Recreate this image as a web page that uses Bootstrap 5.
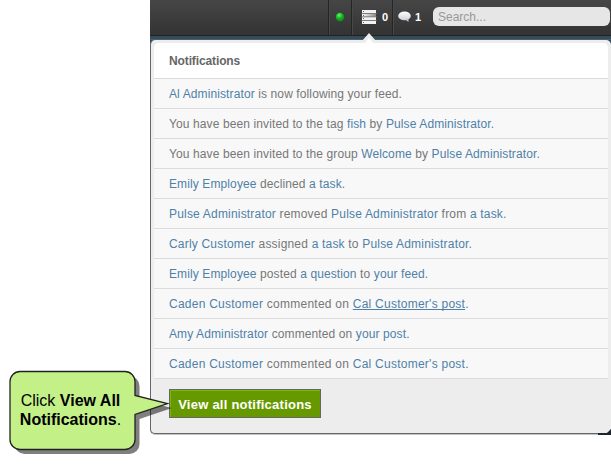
<!DOCTYPE html>
<html lang="en">
<head>
<meta charset="utf-8">
<title>Notifications</title>
<link href="https://cdn.jsdelivr.net/npm/bootstrap@5.3.0/dist/css/bootstrap.min.css" rel="stylesheet">
<style>
body{font-family:"Liberation Sans",Arial,sans-serif;font-size:12px;line-height:15px;color:#777;background:#fff;width:611px;height:464px;overflow:hidden}
.app-shell{margin-left:150px;width:461px}
.topbar{height:40px;padding-right:1px;background:linear-gradient(#464646,#333 35px,#222 35px,#222 36px,#344b5c 36px,#344b5c 39px,#4d5c66 39px)}
.tool{height:35px;border-left:1px solid #252525;box-shadow:inset 1px 0 #484848;color:#fff;font-size:11px;font-weight:700;padding-bottom:1px}
.tool-status{width:23px}.tool-feed{width:41px;padding-left:9px}.tool-chat{width:41px;padding-left:5px}
.tool-count{margin-left:5px;padding-top:1px}
.tool-chat .tool-count{margin-left:4px}
.search-box{width:177px;height:19px;margin-top:7px;border:0;border-radius:6px;background:#e6e6e6;padding:1px 5px 0;font-size:12px;line-height:18px;color:#777}
.search-box::placeholder{color:#999;opacity:1}
.tray-wrap{background:linear-gradient(#344b5c 10px,#fff 10px)}
.tray{height:394px;background:#ededed;border:1px solid #666;border-width:0 0 1px 1px;border-radius:5px;padding:3px 3px 0;box-shadow:0 1px #c4c4c4}
.tray-list{width:454px;border-radius:5px 5px 0 0;overflow:hidden;background:#f8f8f8}
.tray-list .list-group-item{height:30px;padding:8px 15px 0;border:0;border-bottom:1px solid #dcdcdc;border-radius:0;background:#f8f8f8;color:#777;white-space:nowrap;letter-spacing:.11px}
.tray-list .list-group-item.track-mid{letter-spacing:.19px}
.tray-list .list-group-item.track-wide{letter-spacing:.25px}
.tray-list .tray-title{height:36px;padding-top:11px;background:#fff;color:#666;font-weight:700;letter-spacing:-.12px}
.tray-list a{color:#4f81a8;text-decoration:none}
.tray-list a.hovered{text-decoration:underline 1px;text-underline-offset:1px;text-decoration-skip-ink:none}
.btn-all{margin:10px 0 0 15px;width:152px;height:29px;padding:0;border:1px solid #666;border-radius:0;background:#690;box-shadow:inset 1px 1px #7fb800;color:#fff;font-size:13px;font-weight:700;line-height:29px;letter-spacing:.24px}
.btn-all:hover{background:#5c8a00;color:#fff}
.pointer{left:362px;top:33px}
.callout{left:9px;top:370px;width:170px;height:86px}
.callout-text{left:0;top:21px;width:123px;color:#000;font-size:16px;line-height:19px}
.callout b{font-weight:700}
.corner{left:598px;top:429px}
</style>
</head>
<body class="position-relative">
<div class="app-shell">
  <header class="topbar d-flex justify-content-end align-items-start">
    <div class="tool tool-status d-flex align-items-center justify-content-center">
      <svg width="10" height="10"><defs><radialGradient id="led" cx=".4" cy=".3"><stop offset="0" stop-color="#6cf06c"/><stop offset=".6" stop-color="#1fc52a"/><stop offset="1" stop-color="#0f9c1b"/></radialGradient></defs><circle cx="5" cy="5" r="4.2" fill="url(#led)"/></svg>
    </div>
    <div class="tool tool-feed d-flex align-items-center">
      <svg width="16" height="14"><defs><linearGradient id="sheet" x2="1" y2="0"><stop stop-color="#fff"/><stop offset="1" stop-color="#888"/></linearGradient></defs><path fill="#bbb" d="M1 0h14v14H1z"/><path fill="#f2f2f2" d="M1 0h14v3H1zM1 7h14v3H1zM1 11h14v3H1z"/><path fill="url(#sheet)" d="M1 4h14v2.500H1z"/><path fill="#666" d="M0 3h16v.7H0zM0 6.500h16v.7H0zM0 10.200h16v.7H0zM2 1h1v1H2zM2 5h1v1H2zM2 8h1v1H2zM2 12h1v1H2z"/></svg>
      <span class="tool-count">0</span>
    </div>
    <div class="tool tool-chat d-flex align-items-center">
      <svg width="13" height="12"><defs><linearGradient id="bub" x2="0" y2="1"><stop stop-color="#fff"/><stop offset="1" stop-color="#d0d0d8"/></linearGradient></defs><ellipse cx="6.500" cy="4.900" rx="6.300" ry="4.400" fill="url(#bub)"/><path fill="#c4c4cb" d="M7 8.500l3.500-1v3.500z"/></svg>
      <span class="tool-count">1</span>
    </div>
    <input class="search-box" type="text" placeholder="Search..." aria-label="Search">
  </header>
  <div class="tray-wrap">
  <section class="tray">
    <ul class="list-group tray-list">
      <li class="list-group-item tray-title">Notifications</li>
      <li class="list-group-item"><a href="#">Al Administrator</a> is now following your feed.</li>
      <li class="list-group-item">You have been invited to the tag <a href="#">fish</a> by <a href="#">Pulse Administrator.</a></li>
      <li class="list-group-item">You have been invited to the group <a href="#">Welcome</a> by <a href="#">Pulse Administrator.</a></li>
      <li class="list-group-item"><a href="#">Emily Employee</a> declined <a href="#">a task.</a></li>
      <li class="list-group-item track-mid"><a href="#">Pulse Administrator</a> removed <a href="#">Pulse Administrator</a> from <a href="#">a task.</a></li>
      <li class="list-group-item track-mid"><a href="#">Carly Customer</a> assigned <a href="#">a task</a> to <a href="#">Pulse Administrator.</a></li>
      <li class="list-group-item"><a href="#">Emily Employee</a> posted <a href="#">a question</a> to <a href="#">your feed.</a></li>
      <li class="list-group-item track-wide"><a href="#">Caden Customer</a> commented on <a href="#" class="hovered">Cal Customer's post</a><a href="#">.</a></li>
      <li class="list-group-item"><a href="#">Amy Administrator</a> commented on <a href="#">your post.</a></li>
      <li class="list-group-item track-wide"><a href="#">Caden Customer</a> commented on <a href="#">Cal Customer's post.</a></li>
    </ul>
    <a href="#" class="btn btn-all">View all notifications</a>
  </section>
  </div>
</div>
<svg class="position-absolute pointer" width="14" height="10"><path d="M0 8L7 0l7 8v2H0z" fill="#ededed"/><path d="M3 10l4-5 4 5z" fill="#fff"/></svg>
<svg class="position-absolute corner" width="13" height="6"><path d="M0 4h9l4-4v6H0z" fill="#1c252d"/></svg>
<div class="position-absolute callout">
  <svg width="170" height="86">
    <path d="M11 1.500H116a10 10 0 0 1 10 10V25.500L158.500 33.500L126 44.500V69.500a10 10 0 0 1-10 10H11a10 10 0 0 1-10-10V11.500a10 10 0 0 1 10-10z" fill="#000" fill-opacity=".5" transform="translate(4.500 4.500)"/>
    <path d="M11 1.500H116a10 10 0 0 1 10 10V25.500L158.500 33.500L126 44.500V69.500a10 10 0 0 1-10 10H11a10 10 0 0 1-10-10V11.500a10 10 0 0 1 10-10z" fill="#c4f088" stroke="#222" stroke-width="1.300"/>
  </svg>
  <div class="position-absolute callout-text text-center">Click <b>View All<br>Notifications</b>.</div>
</div>
<script src="https://cdn.jsdelivr.net/npm/bootstrap@5.3.0/dist/js/bootstrap.bundle.min.js"></script>
</body>
</html>
